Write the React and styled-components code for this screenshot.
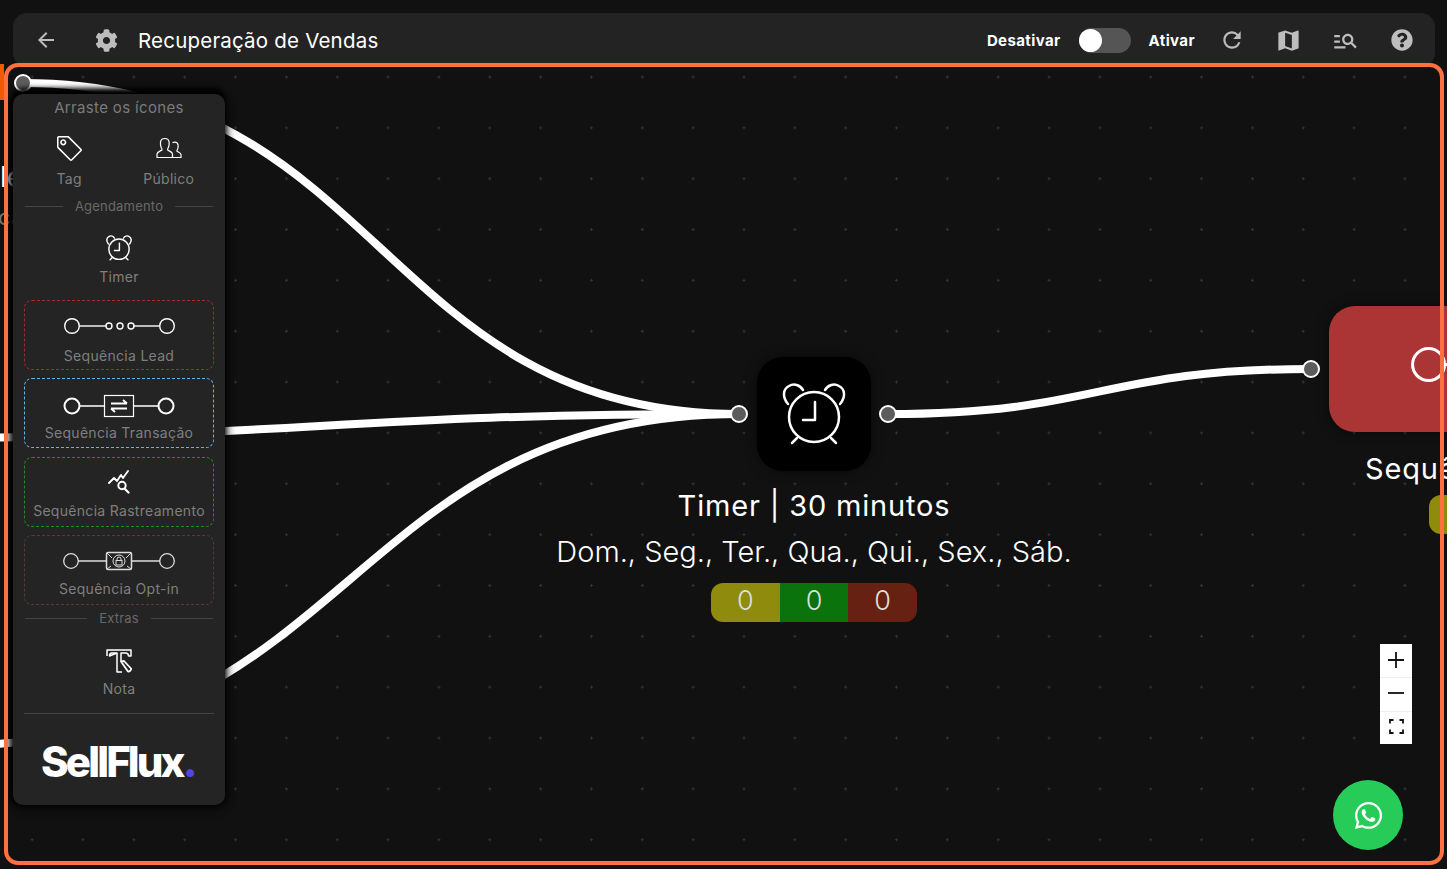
import React from 'react';
import styled, { createGlobalStyle } from 'styled-components';
import { FaCog, FaQuestionCircle, FaWhatsapp } from 'react-icons/fa';
import { MdArrowBack, MdManageSearch, MdMap, MdRefresh } from 'react-icons/md';
import { SlTag } from 'react-icons/sl';

const GlobalStyle = createGlobalStyle`
  html, body {
    margin: 0;
    height: 100%;
    background: #111111;
    font-family: Inter, "Liberation Sans", sans-serif;
  }
  #root { height: 100%; }
`;

const Page = styled.div`
  position: relative;
  height: 869px;
  display: flex;
  flex-direction: column;
  overflow: hidden;
  background: #111111;
`;

const Toolbar = styled.header`
  flex: none;
  height: 54px;
  margin: 13px 12px -4px 13px;
  padding: 0 5px 0 21px;
  box-sizing: border-box;
  display: flex;
  align-items: center;
  border-radius: 14px;
  background: #232323;
  color: #bdbdbd;
`;

const BackButton = styled.span`
  display: flex;
  width: 24px;
  margin-right: 37px;
`;

const Title = styled.h1`
  margin: 0 0 0 20px;
  font-size: 20.5px;
  font-weight: 400;
  letter-spacing: 0.2px;
  color: #ffffff;
`;

const Actions = styled.div`
  margin-left: auto;
  display: flex;
  align-items: center;
`;

const SwitchLabel = styled.span`
  font-size: 15px;
  font-weight: 700;
  letter-spacing: 0.4px;
  color: #ffffff;
`;

const Switch = styled.span`
  width: 52px;
  height: 25px;
  margin: 0 18px;
  display: flex;
  align-items: center;
  border-radius: 13px;
  background: #555555;
  &::before {
    content: "";
    width: 23px;
    height: 23px;
    border-radius: 50%;
    background: #ffffff;
  }
`;

const ToolbarIcons = styled.div`
  margin-left: 9px;
  display: flex;
  align-items: center;
`;

const ToolbarIcon = styled.span`
  width: 56.5px;
  display: flex;
  justify-content: center;
  color: #bdbdbd;
`;

const Board = styled.main`
  position: relative;
  flex: 1;
  margin: 0 3px 4px 4px;
  background-image: radial-gradient(circle, #343434 1px, transparent 1.3px);
  background-size: 50.85px 50.85px;
  background-position: 53.6px -11.4px;
  &::after {
    content: "";
    position: absolute;
    inset: 0;
    z-index: 5;
    border: 4px solid #ff7040;
    border-radius: 14px;
    pointer-events: none;
  }
`;

const EdgeLayer = styled.svg`
  position: absolute;
  left: -4px;
  top: -63px;
  pointer-events: none;
`;

const FlowNode = styled.div`
  position: absolute;
  left: ${p => p.$left}px;
  top: ${p => p.$top}px;
  width: ${p => p.$width}px;
  display: flex;
  flex-direction: column;
  align-items: center;
  color: #ffffff;
`;

const NodeBox = styled.div`
  position: relative;
  width: ${p => p.$width}px;
  height: ${p => p.$height}px;
  display: flex;
  align-items: center;
  justify-content: center;
  border-radius: 26px;
  background: ${p => p.$color};
  box-shadow: 0 0 12px rgba(0, 0, 0, 0.55);
`;

const Handle = styled.span`
  position: absolute;
  ${p => p.$side}: ${p => (p.$side === 'right' ? -26 : -27)}px;
  top: 50%;
  width: 18px;
  height: 18px;
  box-sizing: border-box;
  transform: translateY(-50%);
  border: 2px solid #ffffff;
  border-radius: 50%;
  background: #5c5c5c;
`;

const LooseHandle = styled(Handle)`
  left: 10px;
  top: 20px;
`;

const LeadGlyph = styled.span`
  display: flex;
  margin-bottom: 8px;
`;

const NodeTitle = styled.div`
  margin-top: ${p => p.$top}px;
  font-size: 29px;
  line-height: 40px;
  white-space: nowrap;
  letter-spacing: 0.83px;
`;

const NodeDays = styled.div`
  margin-top: 4px;
  font-size: 29px;
  font-weight: 300;
  line-height: 44px;
  white-space: nowrap;
`;

const Counters = styled.div`
  margin-top: ${p => p.$gap}px;
  width: 206px;
  height: 39px;
  display: grid;
  grid-template-columns: repeat(3, 1fr);
  border-radius: 12px;
  overflow: hidden;
`;

const Counter = styled.span`
  padding-bottom: 4px;
  display: flex;
  align-items: center;
  justify-content: center;
  font-size: 27px;
  font-weight: 300;
  color: #dddddd;
  background: ${p => p.$color};
`;

/* pedaços dos nós que ficaram fora da tela, à esquerda */
const OffNode = styled.span`
  position: absolute;
  left: -4px;
  top: 1px;
  width: 4px;
  height: 36px;
  background: #f05a00;
`;

const OffText = styled.span`
  position: absolute;
  left: ${p => p.$left}px;
  top: ${p => p.$top}px;
  width: ${p => 13 - p.$left}px;
  overflow: hidden;
  font-size: ${p => p.$size}px;
  line-height: 1.3;
  white-space: nowrap;
  color: ${p => p.$color};
`;

const Panel = styled.aside`
  position: absolute;
  z-index: 4;
  left: 9px;
  top: 31px;
  width: 212px;
  box-sizing: border-box;
  padding: 5px 11px 22px;
  display: flex;
  flex-direction: column;
  border-radius: 10px;
  background: #242424;
  color: #7b7b7b;
  box-shadow: 0 -6px 5px #000000, -5px 0 4px rgba(0, 0, 0, 0.55), 3px 2px 8px rgba(0, 0, 0, 0.5), 0 5px 10px rgba(0, 0, 0, 0.4);
`;

const PanelTitle = styled.div`
  font-size: 15px;
  line-height: 18px;
  text-align: center;
  letter-spacing: 0.35px;
`;

const ToolGrid = styled.div`
  margin-top: ${p => p.$top}px;
  display: grid;
  grid-template-columns: repeat(${p => p.$cols}, 1fr);
  column-gap: 9px;
`;

const Tool = styled.div`
  display: flex;
  flex-direction: column;
  align-items: center;
  gap: ${p => p.$gap}px;
  color: #7f7f7f;
`;

const ToolIcon = styled.span`
  height: 26px;
  display: flex;
  align-items: center;
  justify-content: center;
  color: ${p => p.$color || '#ffffff'};
`;

const TagIcon = styled(SlTag)`
  transform: scaleX(-1);
`;

const ToolLabel = styled.span`
  font-size: 14px;
  line-height: 18px;
  letter-spacing: 0.3px;
`;

const Divider = styled.div`
  margin: ${p => p.$top}px 1px 0;
  display: flex;
  align-items: center;
  gap: 12px;
  font-size: 13px;
  line-height: 18px;
  letter-spacing: 0.2px;
  color: #696969;
  &::before, &::after {
    content: "";
    flex: 1;
    height: 1px;
    background: #444444;
  }
`;

const Cards = styled.div`
  margin-top: 14px;
  display: flex;
  flex-direction: column;
  gap: 8.4px;
`;

const Card = styled.div`
  height: 70px;
  box-sizing: border-box;
  padding-top: ${p => p.$pad}px;
  display: flex;
  flex-direction: column;
  align-items: center;
  gap: ${p => p.$gap}px;
  border: 1px dashed ${p => p.$color};
  border-radius: 8px;
  color: #7f7f7f;
`;

const Rule = styled.hr`
  margin: 15px 0 0;
  border: 0;
  border-top: 1px solid #444444;
`;

const Logo = styled.div`
  margin-top: 27px;
  padding-left: 17px;
  font-size: 42px;
  font-weight: 800;
  line-height: 42px;
  letter-spacing: -2.9px;
  color: #ffffff;
  span { color: #4f46e5; }
`;

const ZoomControls = styled.div`
  position: absolute;
  z-index: 3;
  right: 32px;
  top: 581px;
  width: 32px;
  display: flex;
  flex-direction: column;
  background: #ffffff;
`;

const ZoomButton = styled.span`
  height: 33.3px;
  box-sizing: border-box;
  padding-bottom: 2px;
  display: flex;
  align-items: center;
  justify-content: center;
  color: #111111;
  & + & { border-top: 1px solid #eeeeee; }
`;

const WhatsappButton = styled.a`
  position: absolute;
  z-index: 3;
  right: 41px;
  top: 717px;
  width: 70px;
  height: 70px;
  display: flex;
  align-items: center;
  justify-content: center;
  border-radius: 50%;
  background: #27cb58;
  color: #ffffff;
`;

const AlarmIcon = ({ size, stroke }) => (
  <svg width={size} height={size} viewBox="0 0 64 64" fill="none" stroke="currentColor" strokeWidth={stroke} strokeLinecap="round" strokeLinejoin="round">
    <circle cx="32" cy="35" r="25" />
    <path d="M6 22C0 15 1 7 7 4c5-3 11-1 14 4" />
    <path d="M58 22c6-7 5-15-1-18-5-3-11-1-14 4" />
    <path d="M15 56l-5 5M49 56l5 5" />
    <path d="M33 20v18H21" />
  </svg>
);

const PeopleIcon = () => (
  <svg width="26" height="24" viewBox="0 0 26 24" fill="none" stroke="currentColor" strokeWidth="1.2" strokeLinejoin="round">
    <path d="M1 21.500h15.500v-3.500c0-2-3.500-3-4.800-4-.4-1 .2-1.500.8-2.800.6-1.500.8-3 .6-5C12.800 4 11 2.500 8.800 2.500 6.500 2.500 4.800 4 4.500 6.200c-.2 2 0 3.500.6 5 .6 1.300 1.200 1.800.8 2.800-1.300 1-4.900 2-4.900 4z" />
    <path d="M16.500 21.500H25v-3c0-1.700-3-2.500-4-3.300-.3-.8.2-1.300.7-2.300.5-1.300.6-2.500.4-3.900-.3-1.800-1.700-2.900-3.400-2.900-.8 0-1.600.3-2.200.8" />
  </svg>
);

const LeadIcon = ({ width = 111 }) => (
  <svg width={width} height={width * 16 / 111} viewBox="0 0 111 16" fill="none" stroke="currentColor" strokeWidth="1.4">
    <circle cx="8" cy="8" r="7.300" />
    <path d="M15.300 8H42" />
    <circle cx="45" cy="8" r="3" />
    <circle cx="56" cy="8" r="3" />
    <circle cx="67" cy="8" r="3" />
    <path d="M70 8h25.700" />
    <circle cx="103" cy="8" r="7.300" />
  </svg>
);

const TransactionIcon = () => (
  <svg width="112" height="24" viewBox="0 0 112 24" fill="none" stroke="currentColor">
    <circle cx="9" cy="12" r="7.500" strokeWidth="2" />
    <path d="M16.500 12H41M71 12h24" strokeWidth="1.600" />
    <rect x="41.500" y="1.500" width="29" height="21" strokeWidth="1.200" />
    <path d="M48 9.500h16M60 6l4 3.500M48 14.500h16M52 18l-4-3.500" strokeWidth="1.800" />
    <circle cx="103" cy="12" r="7.500" strokeWidth="2" />
  </svg>
);

const TrackingIcon = () => (
  <svg width="22" height="24" viewBox="0 0 22 24" fill="none" stroke="currentColor" strokeLinejoin="round" strokeLinecap="round">
    <path d="M1 13l5-5 3 3 4-6 2 3 5-7" strokeWidth="1.900" />
    <circle cx="14" cy="15.500" r="3.700" strokeWidth="2" />
    <path d="M17 19l3.500 3.500" strokeWidth="2.200" />
  </svg>
);

const OptinIcon = () => (
  <svg width="112" height="20" viewBox="0 0 112 20" fill="none" stroke="currentColor">
    <circle cx="8" cy="10" r="7.300" strokeWidth="1.300" />
    <path d="M15 10h28M69 10h28" strokeWidth="1.400" />
    <rect x="43.500" y="1.500" width="25" height="17" rx="1.500" strokeWidth="1.500" />
    <path d="M44 2l5 5M68 2l-5 5M44 18l4-3M68 18l-4-3" strokeWidth="1" />
    <circle cx="56" cy="10" r="6" strokeWidth="1" />
    <rect x="53" y="9.500" width="6" height="4.500" strokeWidth="1" />
    <path d="M54 9.500V8a2 2 0 0 1 4 0v1.500" strokeWidth="1" />
    <circle cx="104" cy="10" r="7.300" strokeWidth="1.300" />
  </svg>
);

const NoteIcon = () => (
  <svg width="26" height="26" viewBox="0 0 26 26" fill="none" stroke="currentColor" strokeWidth="1.500" strokeLinejoin="round">
    <path d="M1 8V2h24v6h-2.500c0-2-1-3-3-3H15v8M11 5H6C4 5 3.500 6 3.500 8z" />
    <path d="M11 5v19h5" />
    <path d="M15 13.500l3-.5 7 7.500c.5 1-1.500 3.500-3 3z" strokeWidth="1.800" />
  </svg>
);

const FocusIcon = () => (
  <svg width="15" height="15" viewBox="0 0 15 15" fill="none" stroke="currentColor" strokeWidth="1.800">
    <path d="M1 4.500V1h3.500M10.500 1H14v3.500M14 10.500V14h-3.500M4.500 14H1v-3.500" />
  </svg>
);

const App = () => (
  <Page>
    <GlobalStyle />
    <Toolbar>
      <BackButton><MdArrowBack size={24} /></BackButton>
      <FaCog size={23} />
      <Title>Recuperação de Vendas</Title>
      <Actions>
        <SwitchLabel>Desativar</SwitchLabel>
        <Switch />
        <SwitchLabel>Ativar</SwitchLabel>
        <ToolbarIcons>
          <ToolbarIcon><MdRefresh size={26} /></ToolbarIcon>
          <ToolbarIcon><MdMap size={27} /></ToolbarIcon>
          <ToolbarIcon><MdManageSearch size={27} /></ToolbarIcon>
          <ToolbarIcon><FaQuestionCircle size={22} /></ToolbarIcon>
        </ToolbarIcons>
      </Actions>
    </Toolbar>

    <Board>
      <EdgeLayer width="1447" height="869" fill="none" stroke="#ffffff" strokeWidth="8">
        <path d="M23 83C381 83 381 414 739 414" />
        <path d="M-100 438C320 438 320 414 739 414" />
        <path d="M-40 745C350 745 350 414 739 414" />
        <path d="M888 414C1100 414 1100 369 1311 369" />
      </EdgeLayer>

      <OffNode />
      <OffText $left={-4} $top={96} $size={28} $color="#ffffff">le</OffText>
      <OffText $left={-6} $top={140} $size={22} $color="#777777">ca</OffText>
      <LooseHandle $side="left" />

      <FlowNode $left={500} $top={294} $width={620}>
        <NodeBox $width={114} $height={114} $color="#000000">
          <Handle $side="left" />
          <Handle $side="right" />
          <AlarmIcon size={64} stroke={2.500} />
        </NodeBox>
        <NodeTitle $top={15}>Timer | 30 minutos</NodeTitle>
        <NodeDays>Dom., Seg., Ter., Qua., Qui., Sex., Sáb.</NodeDays>
        <Counters $gap={9}>
          <Counter $color="#8f8b0c">0</Counter>
          <Counter $color="#0b730b">0</Counter>
          <Counter $color="#662113">0</Counter>
        </Counters>
      </FlowNode>

      <FlowNode $left={1325} $top={243} $width={406}>
        <NodeBox $width={406} $height={126} $color="#ab3535">
          <Handle $side="left" />
          <LeadGlyph><LeadIcon width={243} /></LeadGlyph>
        </NodeBox>
        <NodeTitle $top={17}>Sequência Recuperada</NodeTitle>
        <Counters $gap={6}>
          <Counter $color="#8f8b0c">0</Counter>
          <Counter $color="#0b730b">0</Counter>
          <Counter $color="#662113">0</Counter>
        </Counters>
      </FlowNode>

      <Panel>
        <PanelTitle>Arraste os ícones</PanelTitle>
        <ToolGrid $cols={2} $top={18}>
          <Tool $gap={9}>
            <ToolIcon><TagIcon size={25} /></ToolIcon>
            <ToolLabel>Tag</ToolLabel>
          </Tool>
          <Tool $gap={9}>
            <ToolIcon><PeopleIcon /></ToolIcon>
            <ToolLabel>Público</ToolLabel>
          </Tool>
        </ToolGrid>
        <Divider $top={9}>Agendamento</Divider>
        <ToolGrid $cols={1} $top={20}>
          <Tool $gap={7}>
            <ToolIcon><AlarmIcon size={26} stroke={3.500} /></ToolIcon>
            <ToolLabel>Timer</ToolLabel>
          </Tool>
        </ToolGrid>
        <Cards>
          <Card $color="#a52a2a" $pad={12} $gap={8}>
            <ToolIcon><LeadIcon /></ToolIcon>
            <ToolLabel>Sequência Lead</ToolLabel>
          </Card>
          <Card $color="#5db8e8" $pad={14} $gap={5}>
            <ToolIcon><TransactionIcon /></ToolIcon>
            <ToolLabel>Sequência Transação</ToolLabel>
          </Card>
          <Card $color="#258a25" $pad={11} $gap={7}>
            <ToolIcon><TrackingIcon /></ToolIcon>
            <ToolLabel>Sequência Rastreamento</ToolLabel>
          </Card>
          <Card $color="#5a3a32" $pad={12} $gap={6}>
            <ToolIcon $color="#dddddd"><OptinIcon /></ToolIcon>
            <ToolLabel>Sequência Opt-in</ToolLabel>
          </Card>
        </Cards>
        <Divider $top={4}>Extras</Divider>
        <ToolGrid $cols={1} $top={21}>
          <Tool $gap={6}>
            <ToolIcon><NoteIcon /></ToolIcon>
            <ToolLabel>Nota</ToolLabel>
          </Tool>
        </ToolGrid>
        <Rule />
        <Logo>SellFlux<span>.</span></Logo>
      </Panel>

      <ZoomControls>
        <ZoomButton>
          <svg width="16" height="16" viewBox="0 0 16 16" stroke="currentColor" strokeWidth="1.800"><path d="M8 0v16M0 8h16" /></svg>
        </ZoomButton>
        <ZoomButton>
          <svg width="16" height="16" viewBox="0 0 16 16" stroke="currentColor" strokeWidth="1.800"><path d="M0 8h16" /></svg>
        </ZoomButton>
        <ZoomButton><FocusIcon /></ZoomButton>
      </ZoomControls>

      <WhatsappButton><FaWhatsapp size={31} /></WhatsappButton>
    </Board>
  </Page>
);

export default App;
